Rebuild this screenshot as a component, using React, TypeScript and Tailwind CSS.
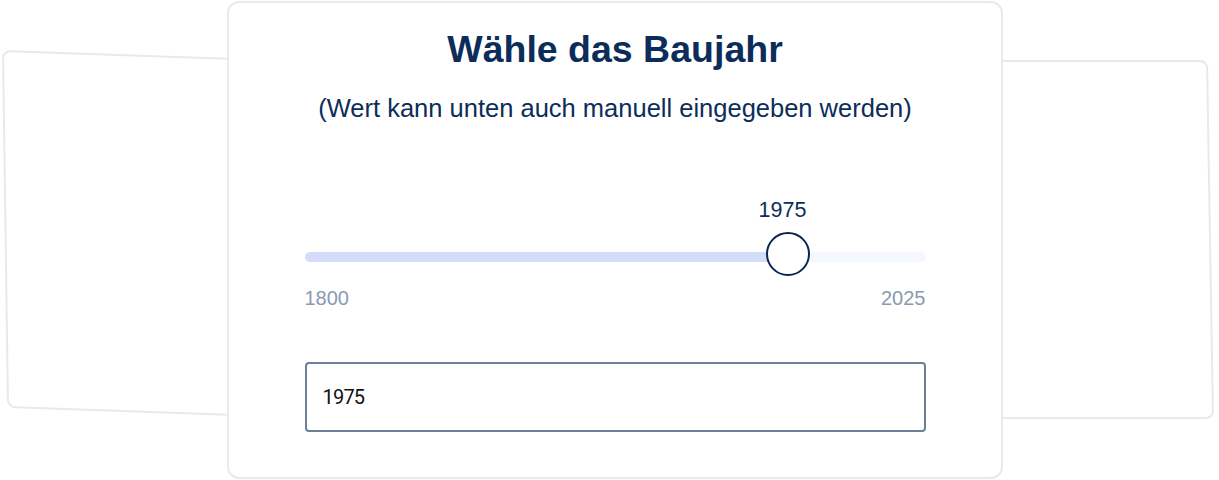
import { useState } from 'react';

const MIN = 1800;
const MAX = 2025;

export default function App() {
  const [year, setYear] = useState(1975);
  const pct = ((year - MIN) / (MAX - MIN)) * 100;

  return (
    <div className="relative w-[1219px] h-[480px] overflow-hidden bg-white font-['Liberation_Sans',Arial,sans-serif]">
      {/* carousel neighbours peeking out behind the active card */}
      <div className="absolute left-[2px] top-[50px] w-[500px] h-[358px] origin-top-left skew-y-2 skew-x-[0.8deg] rounded-lg border-2 border-[#e6e9ee] bg-white" />
      <div className="absolute left-[700px] top-[60px] w-[508px] h-[359px] origin-top-left skew-x-[0.96deg] rounded-lg border-2 border-[#e6e9ee] bg-white" />

      <div className="relative z-10 ml-[227px] mt-[1px] w-[776px] h-[478px] rounded-xl border-2 border-[#e8eaee] bg-white flex flex-col items-center pt-[26px]">
        <h1 className="h-10 text-[37.5px] leading-10 font-bold text-[#0c2d5a]">Wähle das Baujahr</h1>
        <p className="mt-[23px] text-[25.5px] leading-8 text-[#0c2d5a]">
          (Wert kann unten auch manuell eingegeben werden)
        </p>

        <div className="mt-[72px] w-[621px]">
          <div className="relative h-7">
            <span
              className="absolute top-0 -translate-x-1/2 text-[21.5px] leading-7 text-[#0c2d5a]"
              style={{ left: `calc(${pct}% - 5px)` }}
            >
              {year}
            </span>
          </div>
          <div className="relative mt-[28px] h-[10px] rounded-full bg-[#f5f7fe]">
            <div className="h-full rounded-full bg-[#d4dcfa]" style={{ width: `${pct}%` }} />
            <div
              className="absolute top-[-20px] w-11 h-11 -translate-x-1/2 rounded-full border-2 border-[#0a2551] bg-white"
              style={{ left: `${pct}%` }}
            />
          </div>
          <div className="mt-[22px] h-7 flex justify-between text-xl leading-7 text-[#8a9ab1]">
            <span>{MIN}</span>
            <span>{MAX}</span>
          </div>
        </div>

        <input
          type="text"
          value={year}
          onChange={(e) => {
            const v = parseInt(e.target.value, 10);
            if (!isNaN(v)) setYear(Math.min(MAX, Math.max(MIN, v)));
          }}
          className="mt-[50px] w-[621px] h-[70px] rounded border-2 border-[#6b7f99] px-4 font-['Roboto',sans-serif] text-[20px] tracking-[-0.8px] text-[#111] outline-none"
        />
      </div>
    </div>
  );
}
